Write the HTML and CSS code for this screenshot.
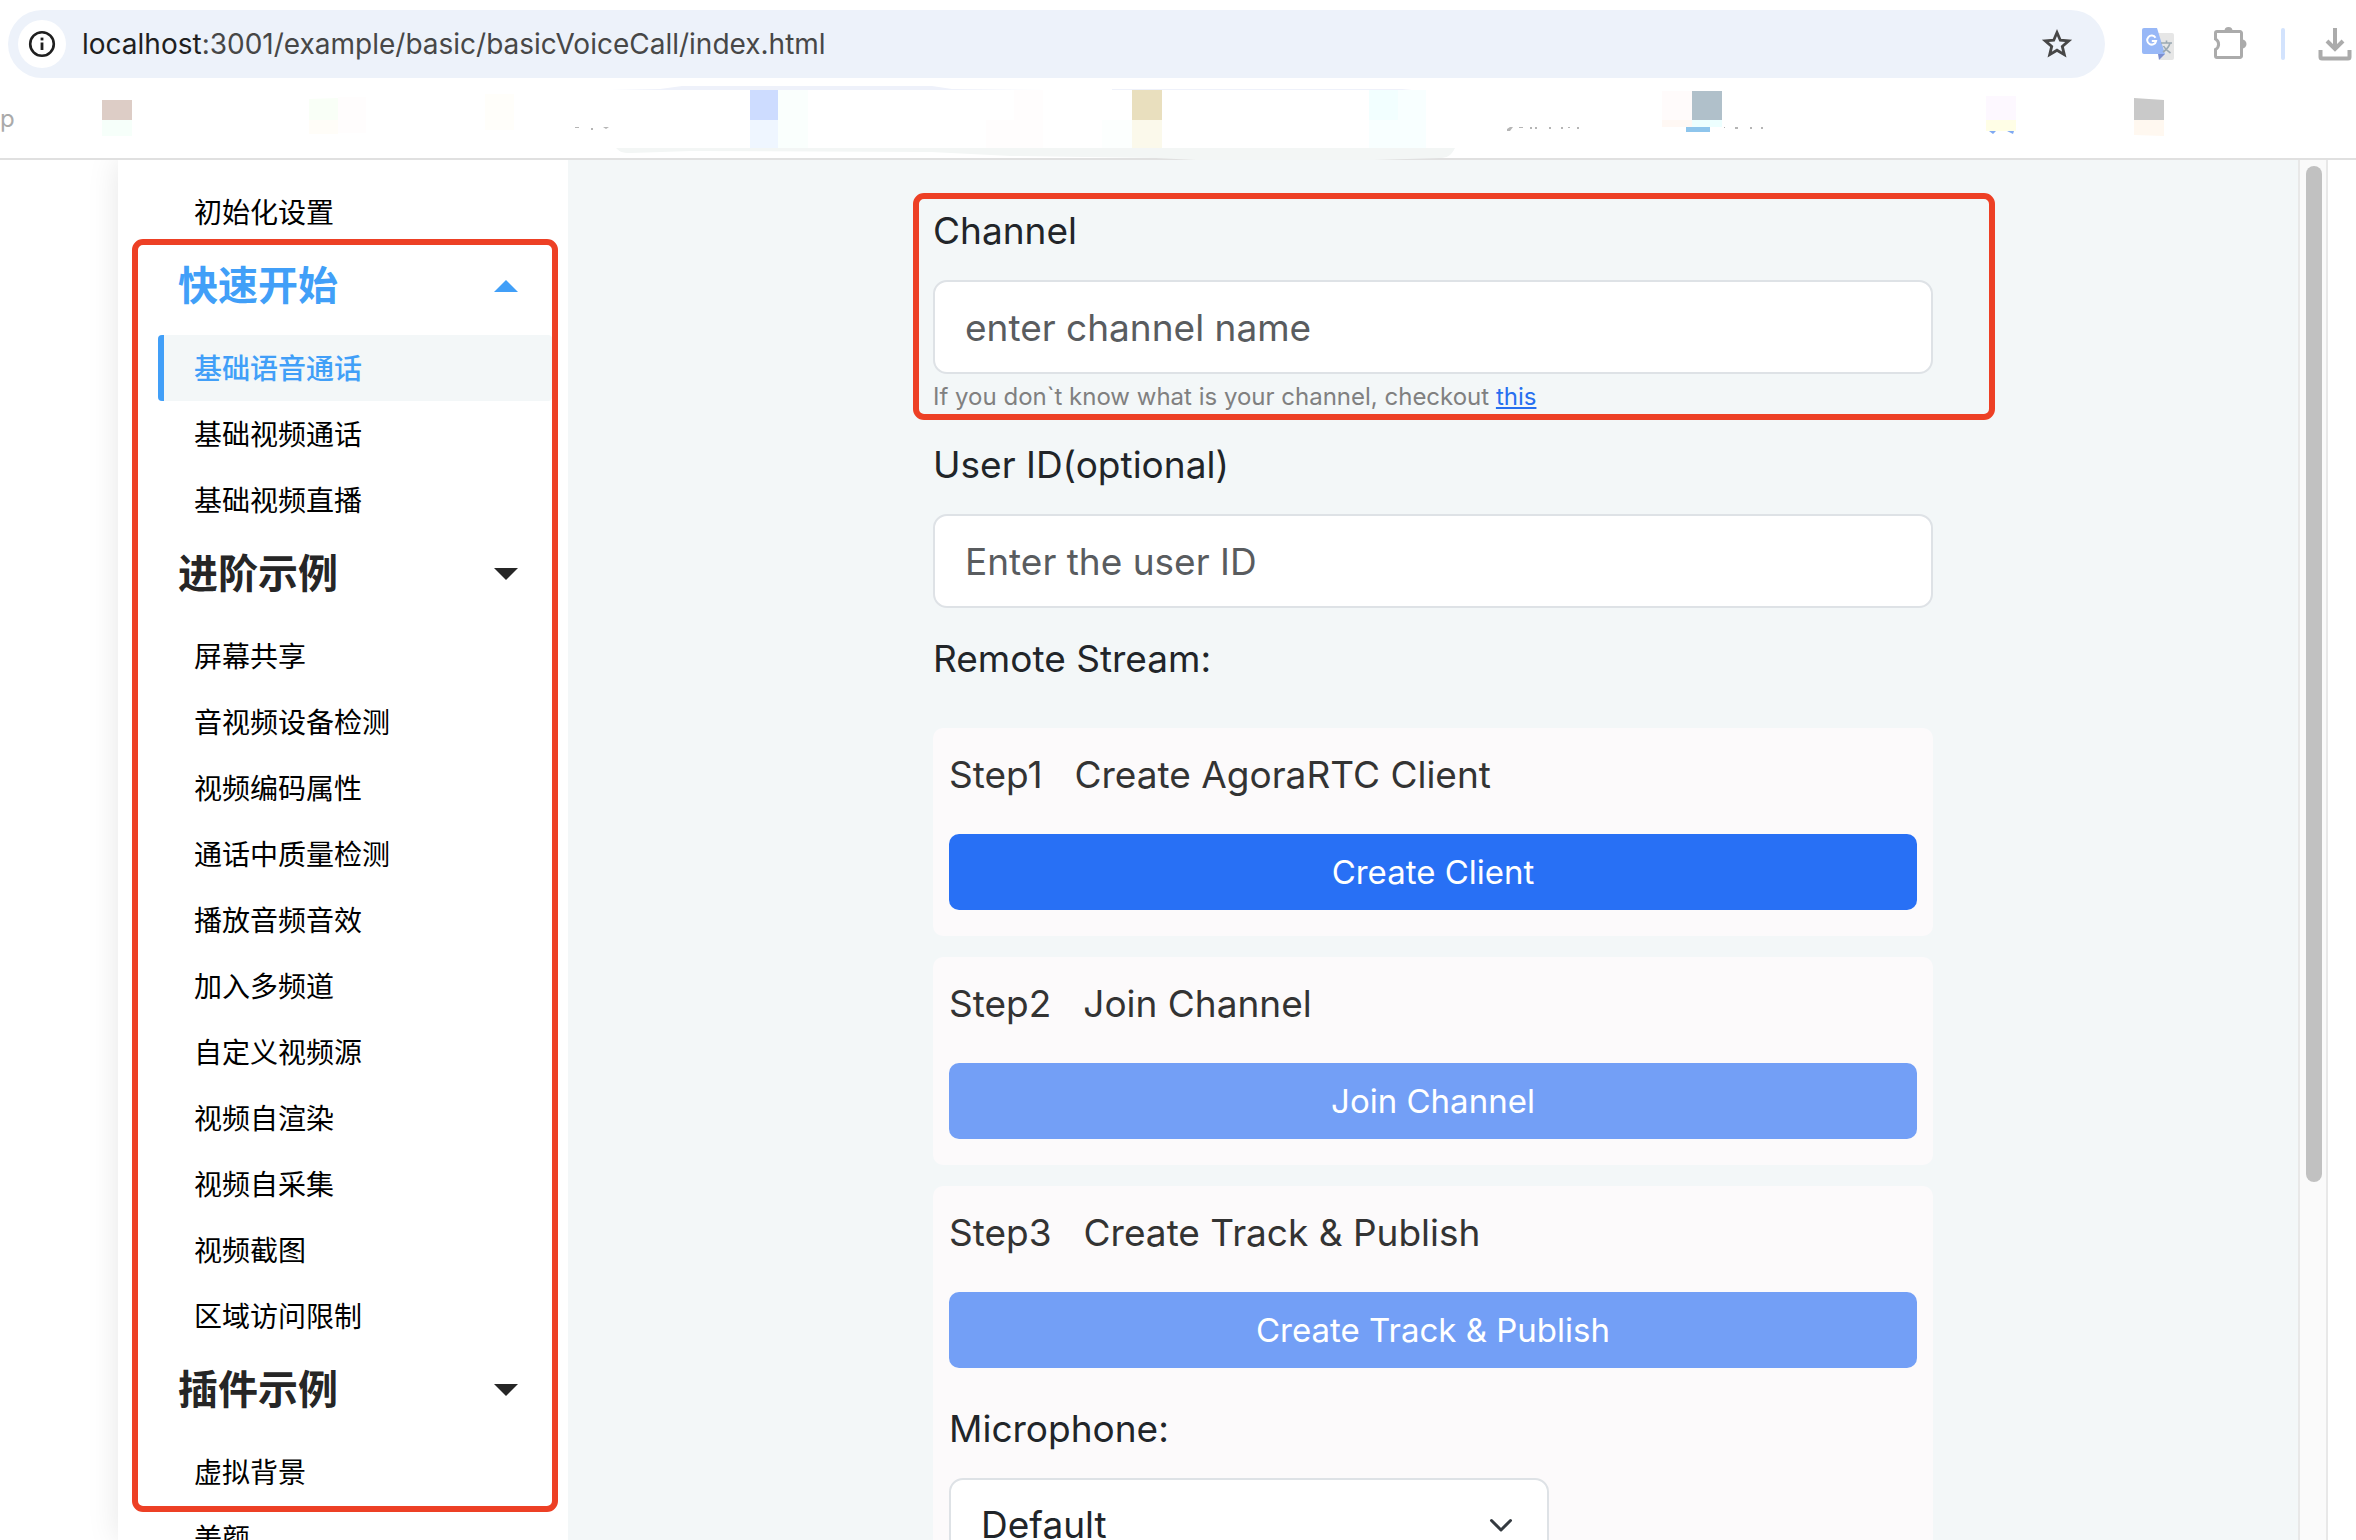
FILE: index.html
```html
<!DOCTYPE html>
<html lang="zh-CN">
<head>
<meta charset="utf-8">
<meta name="viewport" content="width=device-width, initial-scale=1">
<title>Basic Voice Call</title>
<link rel="stylesheet" href="styles.css">
</head>
<body>
<header class="browser">
  <div class="toolbar">
    <div class="address">
      <button class="site-info" type="button" aria-label="Site information">
        <svg width="28" height="28" viewBox="0 0 28 28" fill="none" stroke="#1f1f1f"><circle cx="14" cy="14" r="11.8" stroke-width="2.6"/><path d="M14 12.5v7.5" stroke-width="2.8"/><path d="M14 7.6v2.8" stroke-width="2.8"/></svg>
      </button>
      <p class="url"><span class="host">localhost</span>:3001/example/basic/basicVoiceCall/index.html</p>
      <button class="tool" type="button" aria-label="Bookmark">
        <svg width="32" height="32" viewBox="0 0 32 32" fill="none" stroke="#474747" stroke-width="2.8"><path d="M16 4.500l3.300 7.700 8.400.7-6.400 5.500 2 8.200-7.300-4.400-7.300 4.400 2-8.200-6.400-5.500 8.400-.7z"/></svg>
      </button>
    </div>
    <div class="extensions">
      <button class="tool" type="button" aria-label="Translate">
        <svg width="34" height="34" viewBox="0 0 34 34"><path d="M14 6h17a2 2 0 0 1 2 2v23a2 2 0 0 1-2 2H19z" fill="#e6e6e6"/><path d="M17 27h7l-6 6z" fill="#7d8fd0"/><path d="M3 1h13l8 26H3a2 2 0 0 1-2-2V3a2 2 0 0 1 2-2z" fill="#98b8f7"/><path d="M14.500 10.700a4.500 4.500 0 1 0 .6 3.300h-4.300" fill="none" stroke="#fff" stroke-width="2"/><path d="M20 16h11M25.500 13.500V16M29 16c-1 4-4 7-7 9M22.500 19c1.500 3 4 5 7 7" fill="none" stroke="#9ba9b3" stroke-width="1.600"/></svg>
      </button>
      <button class="tool" type="button" aria-label="Extensions">
        <svg width="40" height="36" viewBox="-4 1 40 36"><path d="M5 6.500h23a1.500 1.500 0 0 1 1.500 1.500v23a1.500 1.500 0 0 1-1.500 1.500H5A1.500 1.500 0 0 1 3.500 31v-6.500a6 6 0 0 0 0-10.500V8A1.500 1.500 0 0 1 5 6.500z" fill="none" stroke="#ababab" stroke-width="3"/><path d="M12.500 6a4 4 0 0 1 8 0zM30 14.500a4.500 4.500 0 0 1 0 9z" fill="#ababab"/></svg>
      </button>
      <span class="divider"></span>
      <button class="tool" type="button" aria-label="Downloads">
        <svg width="34" height="34" viewBox="0 0 34 34" fill="none" stroke="#ababab" stroke-width="4"><path d="M17 1v21M9 14l8 8 8-8M2.500 23v7a1.500 1.500 0 0 0 1.500 1.500h26a1.500 1.500 0 0 0 1.500-1.500v-7"/></svg>
      </button>
    </div>
  </div>
  <div class="bookmarks">
    <span class="bookmark-text">p</span>
    <svg class="bookmark-art" width="2356" height="76" viewBox="0 84 2356 76" aria-hidden="true">
      <path fill="#eef1fa" d="M610 90l50-1 22-3h250l20 3 96 1zM1112 89h290l10 1h-300z"/>
      <path fill="#ddcdc6" d="M102 100h30v20h-30z"/><path fill="#f6fffa" d="M102 120h30v16h-30z"/>
      <path fill="#f9fff7" d="M309 99l29-1v22h-29z"/><path fill="#fffdf8" d="M309 120h29v14h-29z"/><path fill="#fffdfd" d="M338 97h28v36h-28z"/>
      <path fill="#fffefa" d="M485 94h29v36h-29z"/>
      <path fill="#cddcff" d="M750 90h28v30h-28z"/><path fill="#eff6ff" d="M750 120h28v28h-28z"/><path fill="#fafffd" d="M778 90h30v58h-30z"/>
      <path fill="#fffdfd" d="M1014 90h29v30h-29zM986 120h57v28h-57z"/>
      <path fill="#fcfffe" d="M1102 120h30v28h-30z"/>
      <path fill="#e9dfbe" d="M1132 90h30v30h-30z"/><path fill="#fbf9eb" d="M1132 120h30v28h-30z"/>
      <path fill="#f2ffff" d="M1369 90h29v30h-29z"/><path fill="#f8ffff" d="M1398 90h28v30h-28zM1369 120h57v28h-57z"/>
      <path fill="#fffbfb" d="M1662 91h30v29h-30z"/><path fill="#b0c0ca" d="M1692 91h30v29h-30z"/><path fill="#fff8f4" d="M1662 120h30v7h-30z"/><path fill="#edffff" d="M1692 120h30v7h-30z"/><path fill="#8ec5ec" d="M1686 127h24v5h-24z"/>
      <path fill="#fdf8ff" d="M1986 96h30v24h-30z"/><path fill="#fffee6" d="M1986 120h30v11h-30z"/><path fill="#7fa9f2" d="M1989 131h7l-3 3zM2007 131h7l-1 3z"/>
      <path fill="#c9c9c9" d="M2134 98l30 2v20h-30z"/><path fill="#fff8f0" d="M2134 120h30v16l-30-1z"/>
      <path fill="#b5b5b5" d="M575 127h4v1h-4zM591 128h2v2h-2zM603 127h6l-3 2zM1507 129l3-2h3l-3 4h-3zM1519 127h4v1h-4zM1530 127h2v2h-2zM1535 127h2v2h-2zM1549 127h2v2h-2zM1561 127h2v2h-2zM1568 127h2v1h-2zM1577 127h2v2h-2zM1724 127h1v1h-1zM1735 127h3v2h-3zM1750 127h2v2h-2zM1761 127h2v2h-2z"/>
      <path fill="#f3f6f5" d="M616 148h839c-4 8-8 10-16 10l-65 2h-178l-40-2-145-2-80-4-240-1-60 2c-10 0-12-2-15-5z"/>
    </svg>
  </div>
</header>

<div class="page">
  <nav class="sidebar">
    <a class="item" href="#setup">初始化设置</a>
    <div class="groups">
      <button class="group open" type="button">快速开始<i class="caret"></i></button>
      <a class="item active" href="#voice">基础语音通话</a>
      <a class="item" href="#video">基础视频通话</a>
      <a class="item" href="#live">基础视频直播</a>
      <button class="group" type="button">进阶示例<i class="caret"></i></button>
      <a class="item" href="#share">屏幕共享</a>
      <a class="item" href="#device">音视频设备检测</a>
      <a class="item" href="#encoder">视频编码属性</a>
      <a class="item" href="#quality">通话中质量检测</a>
      <a class="item" href="#audio">播放音频音效</a>
      <a class="item" href="#multi">加入多频道</a>
      <a class="item" href="#source">自定义视频源</a>
      <a class="item" href="#render">视频自渲染</a>
      <a class="item" href="#capture">视频自采集</a>
      <a class="item" href="#snapshot">视频截图</a>
      <a class="item" href="#region">区域访问限制</a>
      <button class="group" type="button">插件示例<i class="caret"></i></button>
      <a class="item" href="#background">虚拟背景</a>
      <span class="mark mark-nav"></span>
    </div>
    <a class="item" href="#beauty">美颜</a>
  </nav>

  <main class="content">
    <form class="form">
      <div class="field channel">
        <label class="label" for="channel">Channel</label>
        <input class="input" id="channel" type="text" placeholder="enter channel name">
        <p class="help">If you don`t know what is your channel, checkout <a href="#this">this</a></p>
        <span class="mark mark-field"></span>
      </div>
      <div class="field">
        <label class="label" for="uid">User ID(optional)</label>
        <input class="input" id="uid" type="text" placeholder="Enter the user ID">
      </div>
      <p class="label stream">Remote Stream:</p>
      <div class="steps">
        <section class="card">
          <h2 class="step"><span>Step1</span><span>Create AgoraRTC Client</span></h2>
          <button class="btn" type="button">Create Client</button>
        </section>
        <section class="card">
          <h2 class="step"><span>Step2</span><span>Join Channel</span></h2>
          <button class="btn" type="button" disabled>Join Channel</button>
        </section>
        <section class="card">
          <h2 class="step"><span>Step3</span><span>Create Track &amp; Publish</span></h2>
          <button class="btn" type="button" disabled>Create Track &amp; Publish</button>
          <div class="mic">
            <label class="label" for="mic">Microphone:</label>
            <div class="select-wrap">
              <select class="input select" id="mic"><option>Default</option></select>
              <svg class="chevron" width="24" height="16" viewBox="0 0 24 16" fill="none" stroke="#343a40" stroke-width="3" stroke-linecap="round" stroke-linejoin="round"><path d="M2.500 2.500L12 12l9.500-9.500"/></svg>
            </div>
          </div>
        </section>
      </div>
    </form>
  </main>
  <div class="scrollbar"><div class="thumb"></div></div>
</div>
</body>
</html>
```

FILE: styles.css
```css
* { box-sizing: border-box; }

body {
  margin: 0;
  height: 100vh;
  display: flex;
  flex-direction: column;
  overflow: hidden;
  background: #fff;
  color: #212529;
  font-family: Inter, "Noto Sans CJK SC", sans-serif;
}

button, input, select { font: inherit; color: inherit; }
p, h2 { margin: 0; }

/* Browser chrome */
.browser { flex: none; border-bottom: 2px solid #e0e0e0; }
.toolbar { display: flex; align-items: center; padding: 10px 0 6px 8px; }
.address {
  flex: 1;
  display: flex;
  align-items: center;
  height: 68px;
  padding: 0 32px 0 10px;
  border-radius: 34px;
  background: #edf2fa;
}
.site-info {
  display: grid;
  place-items: center;
  width: 48px;
  height: 48px;
  padding: 0;
  border: 0;
  border-radius: 50%;
  background: #fff;
}
.url { flex: 1; padding-left: 16px; font-size: 28px; line-height: 40px; color: #474747; white-space: nowrap; }
.host { color: #1f1f1f; }
.tool { display: grid; place-items: center; padding: 0; border: 0; background: none; }
.extensions { display: flex; align-items: center; gap: 33px; padding: 0 4px 0 36px; }
.divider { width: 4px; height: 32px; border-radius: 2px; background: #d3e3fd; }

.bookmarks { position: relative; height: 74px; font-size: 24px; color: #aaa; }
.bookmark-text { display: block; padding-top: 20px; line-height: 30px; }
.bookmark-art { position: absolute; top: 0; left: 0; }

/* Page */
.page { flex: 1; min-height: 0; display: flex; padding: 0 28px 0 118px; overflow: hidden; }

.sidebar {
  flex: none;
  width: 450px;
  padding: 19px 16px 0 40px;
  background: #fff;
  box-shadow: 0 0 30px rgba(0, 0, 0, 0.1);
}
.groups { position: relative; }
.item {
  display: block;
  height: 66px;
  padding-left: 30px;
  border-left: 6px solid transparent;
  border-radius: 4px;
  font-size: 28px;
  line-height: 68px;
  color: #000;
  text-decoration: none;
}
.item.active { background: #f3f7f8; border-color: #419ff8; color: #419ff8; font-weight: 500; }
.group {
  display: flex;
  align-items: center;
  justify-content: space-between;
  width: 100%;
  height: 90px;
  padding: 0 34px 8px 20px;
  border: 0;
  background: none;
  font-size: 40px;
  font-weight: 700;
  line-height: 60px;
  color: #262626;
}
.group.open { color: #419ff8; }
.caret { width: 24px; height: 12px; background: currentColor; clip-path: polygon(0 0, 100% 0, 50% 100%); }
.open .caret { clip-path: polygon(50% 0, 100% 100%, 0 100%); }

.mark { position: absolute; border: 6px solid #ed4025; border-radius: 11px; pointer-events: none; }
.mark-nav { inset: -6px -6px -7px -26px; }
.mark-field { inset: -8px -62px -4px -20px; }

.content { flex: 1; min-width: 0; padding: 41px 24px 0; background: #f3f7f8; }
.form { max-width: 1000px; margin: 0 auto; font-size: 37px; line-height: 60px; }
.field { position: relative; }
.channel { margin-bottom: 19px; }
.label { display: block; margin-bottom: 19px; line-height: 60px; }
.input {
  display: block;
  width: 100%;
  height: 94px;
  padding: 0 30px;
  border: 2px solid #dee2e6;
  border-radius: 14px;
  background: #fff;
}
.input::placeholder { color: #595c5f; opacity: 1; }
.help { padding-top: 4px; font-size: 24px; line-height: 38px; color: #808080; }
.help a { color: #266ff0; }
.stream { margin: 21px 0 39px; }

.steps { display: flex; flex-direction: column; gap: 21px; }
.card { padding: 17px 16px 26px; border-radius: 10px; background: #fcfafb; }
.step { display: flex; gap: 32px; margin-bottom: 29px; font-size: 37px; font-weight: 400; line-height: 60px; color: #333; }
.btn {
  display: block;
  width: 100%;
  height: 76px;
  border: 0;
  border-radius: 10px;
  background: #2870f5;
  color: #fff;
  font-size: 33px;
  line-height: 54px;
}
.btn:disabled { background: #739ff6; }
.mic { padding-top: 31px; }
.select-wrap { position: relative; max-width: 600px; }
.select { appearance: none; }
.chevron { position: absolute; top: 40px; right: 36px; pointer-events: none; }

.scrollbar { flex: none; width: 30px; padding: 6px; border: solid #e8e8e8; border-width: 0 2px; background: #fafafa; }
.thumb { width: 16px; height: 1016px; border-radius: 8px; background: #c1c1c1; }
```
